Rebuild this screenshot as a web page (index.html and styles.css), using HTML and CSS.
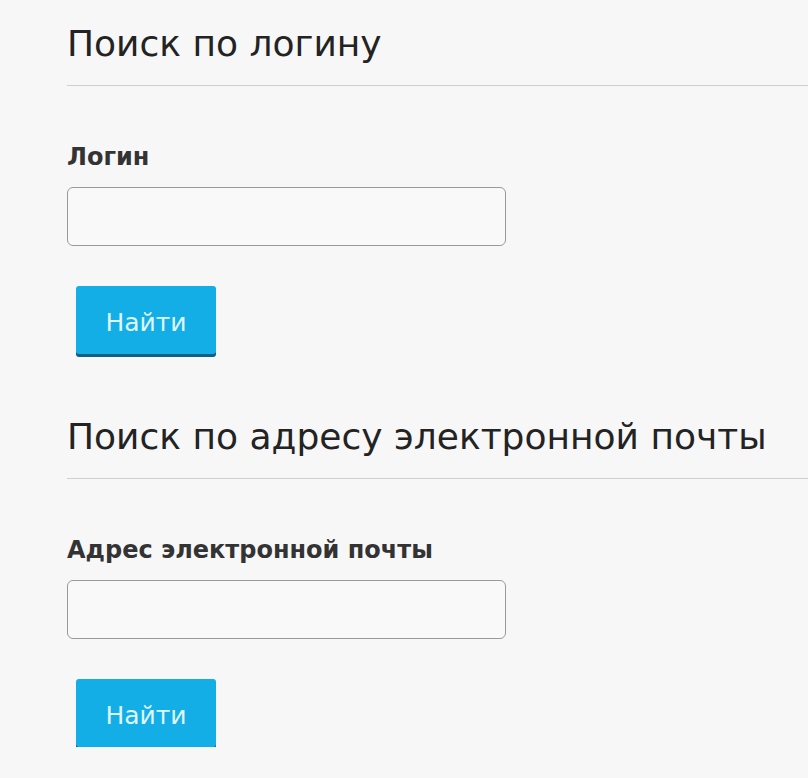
FILE: index.html
```html
<!DOCTYPE html>
<html lang="ru">
<head>
<meta charset="utf-8">
<link rel="stylesheet" href="styles.css">
</head>
<body>
<main class="page">
  <section class="block">
    <h2 class="title">Поиск по логину</h2>
    <form class="form">
      <label class="label" for="login">Логин</label>
      <input class="field" id="login" type="text">
      <button class="btn" type="button">Найти</button>
    </form>
  </section>
  <section class="block">
    <h2 class="title">Поиск по адресу электронной почты</h2>
    <form class="form">
      <label class="label" for="email">Адрес электронной почты</label>
      <input class="field" id="email" type="text">
      <button class="btn" type="button">Найти</button>
    </form>
  </section>
</main>
</body>
</html>
```

FILE: styles.css
```css
html, body {
  margin: 0;
  padding: 0;
  background: #f7f7f7;
  font-family: "DejaVu Sans", "Liberation Sans", Arial, sans-serif;
  color: #2a2a2a;
}
.page {
  padding: 20px 0 0 67px;
}
.block {
  display: flex;
  flex-direction: column;
}
.title {
  margin: 0;
  font-size: 36px;
  font-weight: normal;
  line-height: 48px;
  color: #232323;
  padding-bottom: 17px;
  border-bottom: 1px solid #cfcfcf;
}
.form {
  display: flex;
  flex-direction: column;
  align-items: flex-start;
  padding-top: 58px;
}
.label {
  font-size: 24px;
  font-weight: bold;
  color: #333;
  line-height: 26px;
}
.field {
  margin-top: 17px;
  width: 439px;
  height: 59px;
  box-sizing: border-box;
  border: 1px solid #9a9a9a;
  border-radius: 6px;
  background: #f9f9f9;
}
.btn {
  margin: 40px 0 0 9px;
  width: 140px;
  height: 68px;
  border: none;
  border-radius: 3px;
  background: #13aee6;
  box-shadow: 0 3px 0 #0d5f86;
  color: #dff6ff;
  font-family: "DejaVu Sans", "Liberation Sans", Arial, sans-serif;
  font-size: 25px;
  padding: 5px 0 0;
}
.block + .block {
  margin-top: 59px;
}
```
